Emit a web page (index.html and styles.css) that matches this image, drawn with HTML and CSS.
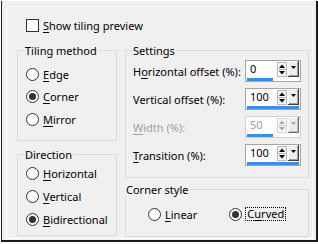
FILE: index.html
```html
<!DOCTYPE html>
<html lang="en">
<head>
  <meta charset="UTF-8">
  <title>Seamless Tiling</title>
  <link rel="stylesheet" href="styles.css">
</head>
<body>
  <div class="window">
    <div class="frame">
      <div class="panel">
        <div class="check-row">
          <span class="checkbox"></span>
          <span><u>S</u>how tiling preview</span>
        </div>

        <div class="columns">
          <div class="col-left">
            <!-- Tiling method -->
            <fieldset class="group tiling">
              <legend>Tiling method</legend>
              <div class="radio-row"><span class="radio"></span><span><u>E</u>dge</span></div>
              <div class="radio-row"><span class="radio checked"></span><span><u>C</u>orner</span></div>
              <div class="radio-row"><span class="radio"></span><span><u>M</u>irror</span></div>
            </fieldset>

            <!-- Direction -->
            <fieldset class="group direction">
              <legend>Direction</legend>
              <div class="radio-row"><span class="radio"></span><span><u>H</u>orizontal</span></div>
              <div class="radio-row"><span class="radio"></span><span><u>V</u>ertical</span></div>
              <div class="radio-row"><span class="radio checked"></span><span><u>B</u>idirectional</span></div>
            </fieldset>
          </div>

          <div class="col-right">
            <!-- Settings -->
            <fieldset class="group settings">
              <legend>Settings</legend>
              <div class="field-row">
                <span class="field-label">H<u>o</u>rizontal offset (%):</span>
                <div class="spin-box">
                  <div class="spin-main">
                    <span class="spin-value">0</span>
                    <svg class="spin-arrows" width="10" height="15" viewBox="0 0 10 15"><rect x="0.5" y="0.5" width="9" height="14" fill="#f7f7f7" stroke="#b9b9b9"/><line x1="1" y1="7.5" x2="9" y2="7.5" stroke="#b9b9b9"/><path d="M2 6h6L5 2.5z" fill="#000"/><path d="M2 9h6l-3 3.5z" fill="#000"/></svg>
                    <svg class="spin-drop" width="11" height="16" viewBox="0 0 11 16"><rect x="0" y="0" width="11" height="16" fill="#404040"/><rect x="0" y="0" width="10" height="15" fill="#fff"/><rect x="1" y="1" width="9" height="14" fill="#a0a0a0"/><rect x="1" y="1" width="8" height="13" fill="#ededed"/><path d="M3 5h5l-2.5 3z" fill="#000"/></svg>
                  </div>
                  <div class="spin-bar" style="width: 26px"></div>
                </div>
              </div>
              <div class="field-row">
                <span class="field-label">Vertical offset (%):</span>
                <div class="spin-box">
                  <div class="spin-main">
                    <span class="spin-value">100</span>
                    <svg class="spin-arrows" width="10" height="15" viewBox="0 0 10 15"><rect x="0.5" y="0.5" width="9" height="14" fill="#f7f7f7" stroke="#b9b9b9"/><line x1="1" y1="7.5" x2="9" y2="7.5" stroke="#b9b9b9"/><path d="M2 6h6L5 2.5z" fill="#000"/><path d="M2 9h6l-3 3.5z" fill="#000"/></svg>
                    <svg class="spin-drop" width="11" height="16" viewBox="0 0 11 16"><rect x="0" y="0" width="11" height="16" fill="#404040"/><rect x="0" y="0" width="10" height="15" fill="#fff"/><rect x="1" y="1" width="9" height="14" fill="#a0a0a0"/><rect x="1" y="1" width="8" height="13" fill="#ededed"/><path d="M3 5h5l-2.5 3z" fill="#000"/></svg>
                  </div>
                  <div class="spin-bar" style="width: 52px"></div>
                </div>
              </div>
              <div class="field-row disabled">
                <span class="field-label"><u>W</u>idth (%):</span>
                <div class="spin-box">
                  <div class="spin-main">
                    <span class="spin-value">50</span>
                    <svg class="spin-arrows" width="10" height="15" viewBox="0 0 10 15"><rect x="0.5" y="0.5" width="9" height="14" fill="#f7f7f7" stroke="#d4d4d4"/><line x1="1" y1="7.5" x2="9" y2="7.5" stroke="#d4d4d4"/><path d="M2 6h6L5 2.5z" fill="#a8a8a8"/><path d="M2 9h6l-3 3.5z" fill="#a8a8a8"/></svg>
                    <svg class="spin-drop" width="11" height="16" viewBox="0 0 11 16"><rect x="0" y="0" width="11" height="16" fill="#707070"/><rect x="0" y="0" width="10" height="15" fill="#fff"/><rect x="1" y="1" width="9" height="14" fill="#b8b8b8"/><rect x="1" y="1" width="8" height="13" fill="#ededed"/><path d="M3 5h5l-2.5 3z" fill="#a8a8a8"/></svg>
                  </div>
                  <div class="spin-bar" style="width: 26px"></div>
                </div>
              </div>
              <div class="field-row">
                <span class="field-label"><u>T</u>ransition (%):</span>
                <div class="spin-box">
                  <div class="spin-main">
                    <span class="spin-value">100</span>
                    <svg class="spin-arrows" width="10" height="15" viewBox="0 0 10 15"><rect x="0.5" y="0.5" width="9" height="14" fill="#f7f7f7" stroke="#b9b9b9"/><line x1="1" y1="7.5" x2="9" y2="7.5" stroke="#b9b9b9"/><path d="M2 6h6L5 2.5z" fill="#000"/><path d="M2 9h6l-3 3.5z" fill="#000"/></svg>
                    <svg class="spin-drop" width="11" height="16" viewBox="0 0 11 16"><rect x="0" y="0" width="11" height="16" fill="#404040"/><rect x="0" y="0" width="10" height="15" fill="#fff"/><rect x="1" y="1" width="9" height="14" fill="#a0a0a0"/><rect x="1" y="1" width="8" height="13" fill="#ededed"/><path d="M3 5h5l-2.5 3z" fill="#000"/></svg>
                  </div>
                  <div class="spin-bar" style="width: 52px"></div>
                </div>
              </div>
            </fieldset>

            <!-- Corner style -->
            <fieldset class="group corner">
              <legend>Corner style</legend>
              <div class="corner-options">
                <div class="radio-row"><span class="radio"></span><span><u>L</u>inear</span></div>
                <div class="radio-row"><span class="radio checked"></span><span class="focused">C<u>u</u>rved</span></div>
              </div>
            </fieldset>
          </div>
        </div>
      </div>
    </div>
  </div>
</body>
</html>
```

FILE: styles.css
```css
* {
  box-sizing: border-box;
}

body {
  margin: 0;
  background-color: #fff;
  font-family: "Noto Sans", "Open Sans", sans-serif;
  font-size: 11px;
  color: #000;
}

u {
  text-decoration-thickness: 1px;
  text-underline-offset: 2px;
}

.window {
  width: 318px;
  height: 244px;
  padding: 1px 0 2px 1px;
}

.frame {
  height: 100%;
  background-color: #f0f0f0;
  border-left: 1px solid #1c1c1c;
  border-right: 2px solid #1c1c1c;
  border-bottom: 2px solid #1c1c1c;
  padding: 5px 3px 1px 4px;
}

.panel {
  height: 100%;
  border: 1px solid #fff;
  padding: 12px 0 0 10px;
}

.check-row {
  display: flex;
  align-items: center;
  gap: 4px;
  height: 13px;
  margin-left: 9px;
  line-height: 13px;
}

.checkbox {
  width: 13px;
  height: 13px;
  border: 1px solid #333;
  background-color: #fff;
}

.columns {
  display: flex;
  gap: 8px;
  margin-top: 11px;
}

.col-left {
  width: 100px;
}

.col-right {
  width: 184px;
}

.group {
  margin: 0;
  border: 1px solid #dcdcdc;
  padding: 0 7px;
  min-width: 0;
}

.group legend {
  margin-left: -1px;
  padding: 0 1px;
  line-height: 15px;
}

.radio-row {
  display: flex;
  align-items: center;
  gap: 4px;
  height: 22.5px;
  padding-left: 1px;
  white-space: nowrap;
}

.radio {
  position: relative;
  width: 13px;
  height: 13px;
  border: 1px solid #333;
  border-radius: 50%;
  background-color: #fff;
  flex-shrink: 0;
}

.radio.checked::after {
  content: "";
  position: absolute;
  left: 2px;
  top: 2px;
  width: 7px;
  height: 7px;
  border-radius: 50%;
  background-color: #333;
}

.tiling {
  padding-top: 5px;
  padding-bottom: 9px;
}

.direction {
  margin-top: 6px;
  padding-top: 0;
  padding-bottom: 4px;
}

.direction .radio-row {
  height: 23px;
}

.settings {
  padding-top: 2px;
  padding-bottom: 11px;
}

.field-row {
  display: flex;
  align-items: center;
  justify-content: space-between;
  height: 22px;
}

.field-row + .field-row {
  margin-top: 6px;
}

.field-label {
  white-space: nowrap;
}

.field-row.disabled .field-label,
.field-row.disabled .spin-value {
  color: #a0a0a0;
}

.field-row.disabled .spin-box {
  border-color: #cfcfcf;
}

.spin-box {
  width: 56px;
  height: 22px;
  flex-shrink: 0;
  border: 1px solid #a5a5a5;
  background-color: #fff;
  padding: 0 1px;
  display: flex;
  flex-direction: column;
}

.spin-main {
  display: flex;
  align-items: center;
  height: 16px;
}

.spin-value {
  flex: 1;
  padding-left: 3px;
  line-height: 16px;
}

.spin-arrows {
  display: block;
}

.spin-drop {
  display: block;
  margin-left: 1px;
}

.spin-bar {
  height: 3px;
  margin-top: 1px;
  background-color: #3b8ee6;
}

.corner {
  margin-top: 4px;
  padding: 6px 0 10px 0;
}

.corner-options {
  display: flex;
  gap: 31px;
  padding-left: 21px;
}

.focused {
  outline: 1px dotted #000;
  outline-offset: 0;
  padding: 0 1px;
  line-height: 12px;
}
```
